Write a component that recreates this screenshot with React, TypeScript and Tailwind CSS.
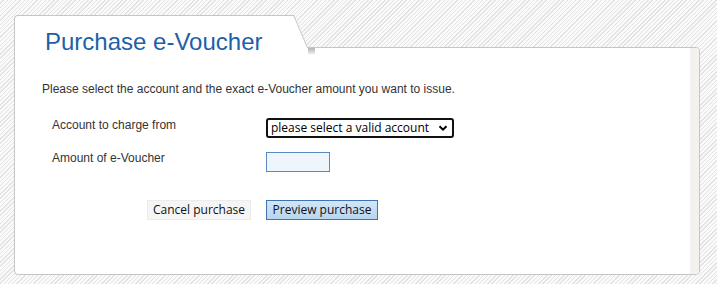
import React from "react";

export default function App() {
  return (
    <div className="h-[284px] w-[717px] overflow-hidden bg-[repeating-linear-gradient(135deg,#fafafa_0_2px,#e3e3e3_2px_3px)] pt-[15px] pl-[14px] pr-[17px] font-['Liberation_Sans',Arial,sans-serif]">
      <div className="relative flex flex-col">
        {/* tab */}
        <div className="relative z-10 -mb-px h-[33px] w-[270px]">
          <div className="absolute left-0 top-0 h-[33px] w-[270px] rounded-tl-[4px] border-l border-t border-[#c6c6c6] bg-white" />
          <div className="absolute left-[240px] top-0 h-[33px] w-[40px] origin-top-left skew-x-[23deg] border-r border-t border-[#c6c6c6] bg-white" />
          <h1 className="relative pl-[31px] pt-[15px] text-[24px] leading-[24px] text-[#1d5fa9]">
            Purchase e-Voucher
          </h1>
        </div>
        {/* body */}
        <div className="flex h-[228px] overflow-hidden rounded-tr-[4px] rounded-b-[4px] border border-[#c6c6c6] bg-white">
          <div className="flex-1 pl-[27px] pt-[33px] text-[12px] text-[#333]">
            <p className="leading-4">Please select the account and the exact e-Voucher amount you want to issue.</p>
            <div className="mt-[21px] grid grid-cols-[214px_1fr] gap-y-[14px] pl-[10px]">
              <div className="-mt-px leading-4">Account to charge from</div>
              <div>
                <div className="flex h-[20px] w-[188px] items-center justify-between rounded-[3px] border-2 border-[#111] bg-white pl-[3px] pr-[4px] font-['Open_Sans',sans-serif] text-[12px] text-black">
                  <span className="whitespace-nowrap leading-none">please select a valid account</span>
                  <svg width="10" height="10" viewBox="0 0 10 10">
                    <path d="M1.5 3.2 L5 6.7 L8.5 3.2" fill="none" stroke="#000" strokeWidth="2" />
                  </svg>
                </div>
              </div>
              <div className="-mt-[2px] leading-4">Amount of e-Voucher</div>
              <div>
                <div className="h-[20px] w-[64px] border border-[#5a89c0] bg-[#eef5fd]" />
              </div>
              <div className="mt-[14px] flex justify-end pr-[15px]">
                <button className="h-[20px] w-[104px] border border-[#ececec] bg-[#f5f5f5] font-['Open_Sans',sans-serif] text-[12px] leading-none text-[#111]">
                  Cancel purchase
                </button>
              </div>
              <div className="mt-[14px]">
                <button className="h-[20px] w-[112px] border border-[#3f74b0] bg-gradient-to-b from-[#d2e6f7] to-[#b8d6f0] font-['Open_Sans',sans-serif] text-[12px] leading-none text-[#111]">
                  Preview purchase
                </button>
              </div>
            </div>
          </div>
          <div className="w-[9px] bg-[#f3f2ee]" />
        </div>
        <div className="absolute left-[294px] top-[33px] z-20 h-[6px] w-[7px] bg-gradient-to-b from-[#b5b5b5] to-[#ececec]" />
      </div>
    </div>
  );
}
